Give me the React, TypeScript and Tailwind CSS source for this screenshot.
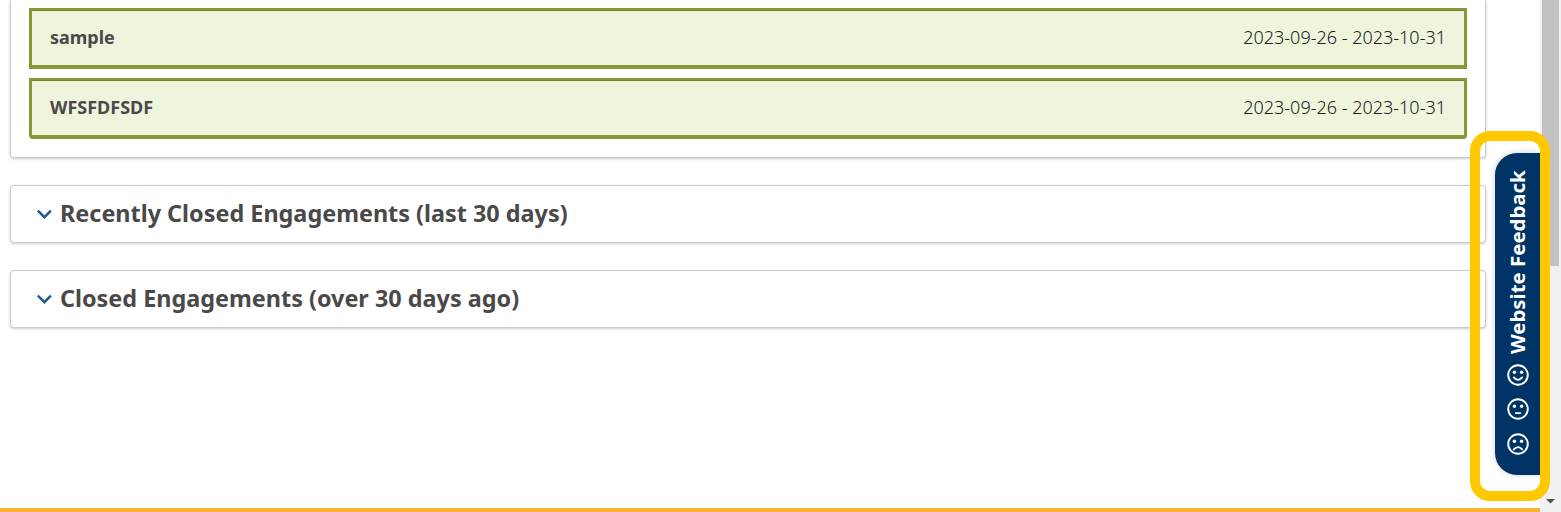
import React from "react";

const engagements = [
  { name: "sample", dates: "2023-09-26 - 2023-10-31" },
  { name: "WFSFDFSDF", dates: "2023-09-26 - 2023-10-31" },
];

const sections = [
  "Recently Closed Engagements (last 30 days)",
  "Closed Engagements (over 30 days ago)",
];

const mouths = {
  happy: "M6.8 13.4 Q11 18.4 15.2 13.4",
  neutral: "M8.8 15.1 H13.2",
  sad: "M6.8 16.4 Q11 11.8 15.2 16.4",
};

function Face({ mood }: { mood: keyof typeof mouths }) {
  return (
    <svg viewBox="0 0 22 22" className="size-[22px] shrink-0" fill="none" stroke="white" strokeWidth="1.9">
      <circle cx="11" cy="11" r="9.8" />
      <circle cx="7.4" cy="8.3" r="1.7" fill="white" stroke="none" />
      <circle cx="14.6" cy="8.3" r="1.7" fill="white" stroke="none" />
      <path d={mouths[mood]} strokeLinecap="round" />
    </svg>
  );
}

function ActiveList() {
  return (
    <section className="flex h-[158px] flex-col gap-[9px] rounded-b-[4px] border border-t-0 border-[#cccccc] px-[18px] pt-2 shadow-[0_1px_3px_rgba(0,0,0,0.2)]">
      {engagements.map((e) => (
        <div
          key={e.name}
          className="flex h-[61px] items-center justify-between border-x-[3px] border-t-2 border-b-4 border-[#869937] bg-[#eff4dd] px-[18px] pb-px text-[18px] leading-6 shadow-[inset_0_1px_0_#75852f] last:rounded-b-[4px]"
        >
          <span className="font-bold">{e.name}</span>
          <span className="font-light text-[#202020]">{e.dates}</span>
        </div>
      ))}
    </section>
  );
}

function ClosedSection({ title }: { title: string }) {
  return (
    <section className="flex h-[58px] items-center rounded-[4px] border border-[#cccccc] bg-white pl-[26px] shadow-[0_1px_3px_rgba(0,0,0,0.2)]">
      <svg viewBox="0 0 16 10" className="mr-[7px] h-[10px] w-4 shrink-0" fill="none" stroke="#1a5a96" strokeWidth="2.4">
        <path d="M0.9 1.7 L7.4 8.2 L13.9 1.7" />
      </svg>
      <h2 className="pb-[2px] text-[23.4px] leading-8 font-bold">{title}</h2>
    </section>
  );
}

export default function App() {
  return (
    <div className="relative flex h-[512px] w-[1561px] overflow-hidden bg-white font-['Noto_Sans',sans-serif] text-[#494949]">
      <main className="flex w-[1540px] flex-col">
        <div className="flex flex-1 flex-col gap-[27px] pr-[54px] pl-[10px]">
          <ActiveList />
          {sections.map((s) => (
            <ClosedSection key={s} title={s} />
          ))}
        </div>
        <div className="h-1 bg-[#fcb332]" />
      </main>

      <aside className="flex w-[21px] flex-col items-center justify-between bg-[#f1f1f1]">
        <div className="h-[266px] w-[17px] bg-[#c1c1c1]" />
        <svg viewBox="0 0 10 5" className="mb-2 h-[5px] w-[10px]" fill="#505050">
          <path d="M0 0 H9 L4.5 4.5 Z" />
        </svg>
      </aside>

      <button className="absolute top-[153px] left-[1495px] flex h-[322px] w-[45px] flex-col items-center rounded-l-[22px] bg-[#003366] pt-[17px] pl-px text-white shadow-[0_0_6px_rgba(0,0,0,0.18)]">
        <span className="mr-[2px] h-[184px] rotate-180 text-[20.4px] leading-6 font-bold whitespace-nowrap [writing-mode:vertical-rl]">
          Website Feedback
        </span>
        <span className="mt-[10px] flex flex-col gap-[12.4px]">
          <Face mood="happy" />
          <Face mood="neutral" />
          <Face mood="sad" />
        </span>
      </button>
      <div className="pointer-events-none absolute top-[131px] left-[1470px] h-[370px] w-[80px] rounded-[20px] border-[10px] border-[#ffc800]" />
    </div>
  );
}
